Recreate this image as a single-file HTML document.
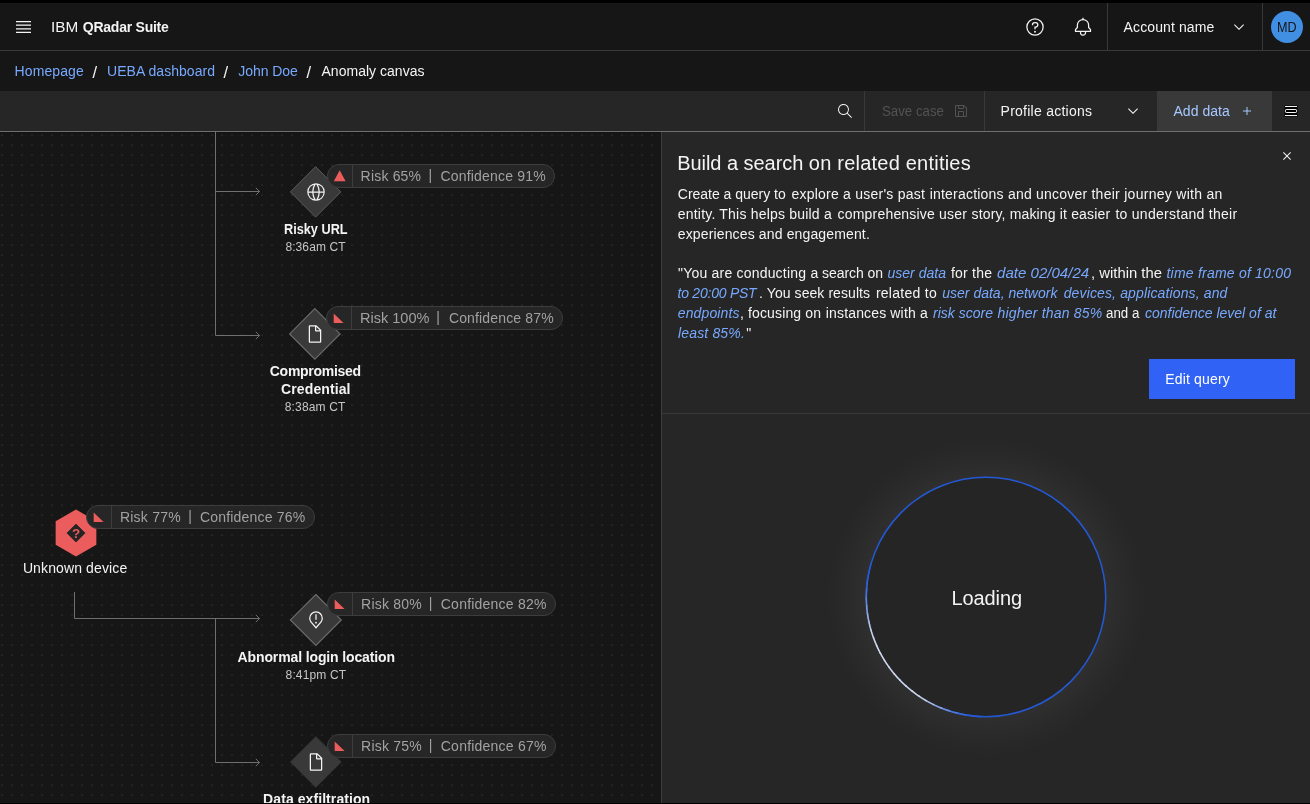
<!DOCTYPE html>
<html lang="en">
<head>
<meta charset="utf-8">
<title>IBM QRadar Suite - Anomaly canvas</title>
<style>
*{box-sizing:border-box;margin:0;padding:0}
html,body{width:1310px;height:804px;overflow:hidden;background:#161616}
body{position:relative;font-family:"Liberation Sans",sans-serif;font-size:14px;line-height:20px;color:#f4f4f4;-webkit-font-smoothing:antialiased}
#root{position:absolute;left:0;top:0;width:1310px;height:804px;will-change:transform}
.abs{position:absolute}
.t{position:absolute;white-space:nowrap;line-height:20px;font-size:14px}
svg{position:absolute;display:block;overflow:visible}
a{color:#78a9ff;text-decoration:none}
/* header */
#topstrip{left:0;top:0;width:1310px;height:3px;background:#000}
#header{left:0;top:3px;width:1310px;height:48px;background:#161616;border-bottom:1px solid #393939}
.vdiv{position:absolute;width:1px;background:#393939}
/* toolbar */
#toolbar{left:0;top:91px;width:1310px;height:41px;background:#262626;border-bottom:1px solid #6f6f6f}
#adddata{left:1157px;top:91px;width:115px;height:40px;background:#393939}
/* canvas */
#canvas{left:0;top:132px;width:661px;height:671px;background-color:#161616;overflow:hidden}
#bottomstrip{left:0;top:803px;width:1310px;height:1px;background:#000}
/* panel */
#panel{left:661px;top:132px;width:649px;height:671px;background:#262626;border-left:1px solid #3e3e3e}
#pdiv{left:662px;top:413px;width:648px;height:1px;background:#393939}
.body{color:#f4f4f4}
.lnk{color:#78a9ff;font-style:italic}
#btn{left:1149px;top:359px;width:146px;height:40px;background:#2f62f5}
#glow{left:826px;top:437px;width:320px;height:320px;border-radius:50%;background:radial-gradient(circle closest-side,#2f2f2f 0,#2f2f2f 75%,#2d2d2d 80%,#2a2a2a 87%,#282828 93%,#262626 100%)}
/* nodes */
.tag{position:absolute;height:24px;background:#262626;border:1px solid #3d3d3d;border-radius:12px}
.tag i{position:absolute;left:24px;top:0;width:1px;height:22px;background:#3d3d3d}
.tagtxt{color:#a2a2a2}
.lbl{font-weight:bold;color:#f4f4f4}
.time{font-size:12px;color:#c6c6c6;line-height:16px}
/*FIT*/
#h-ibm{left:51.01px !important;transform:scaleX(1.0935) !important;transform-origin:0 0}
#h-qr{left:82.80px !important;letter-spacing:-0.246px;transform:none !important}
#h-acc{left:1123.60px !important;letter-spacing:0.108px;transform:none !important}
#h-md{left:1277.20px !important;transform:scaleX(0.9002) !important;transform-origin:0 0}
#b1{left:14.60px !important;letter-spacing:0.100px;transform:none !important}
#b2{left:107.10px !important;letter-spacing:0.039px;transform:none !important}
#b3{left:238.30px !important;letter-spacing:-0.064px;transform:none !important}
#b4{left:321.50px !important;letter-spacing:0.022px;transform:none !important}
#tb-save{left:881.90px !important;transform:scaleX(0.9468) !important;transform-origin:0 0}
#tb-prof{left:1000.60px !important;letter-spacing:0.248px;transform:none !important}
#tb-add{left:1173.50px !important;letter-spacing:0.034px;transform:none !important}
#p-title1{left:677.20px !important;letter-spacing:-0.047px;transform:none !important}
#p-title2{left:808.80px !important;letter-spacing:0.223px;transform:none !important}
#p-b11{left:677.80px !important;letter-spacing:-0.018px;transform:none !important}
#p-b12{left:791.50px !important;letter-spacing:0.227px;transform:none !important}
#p-b13{left:929.70px !important;letter-spacing:0.210px;transform:none !important}
#p-b14{left:1091.40px !important;letter-spacing:0.285px;transform:none !important}
#p-b21{left:677.80px !important;letter-spacing:0.201px;transform:none !important}
#p-b22{left:837.60px !important;letter-spacing:0.188px;transform:none !important}
#p-b23{left:971.50px !important;letter-spacing:0.156px;transform:none !important}
#p-b24{left:1115.40px !important;letter-spacing:0.273px;transform:none !important}
#p-b3{left:677.80px !important;letter-spacing:0.140px;transform:none !important}
#q1a1{left:678.10px !important;letter-spacing:0.198px;transform:none !important}
#q1a2{left:810.50px !important;letter-spacing:-0.057px;transform:none !important}
#q1b{left:887.40px !important;letter-spacing:0.027px;transform:none !important}
#q1c{left:950.90px !important;letter-spacing:0.233px;transform:none !important}
#q1d{left:997.30px !important;transform:scaleX(1.0763) !important;transform-origin:0 0}
#q1e{left:1090.64px !important;transform:scaleX(1.0599) !important;transform-origin:0 0}
#q1f{left:1166.50px !important;letter-spacing:0.215px;transform:none !important}
#q2a{left:677.50px !important;letter-spacing:-0.233px;transform:none !important}
#q2b1{left:759.10px !important;letter-spacing:0.071px;transform:none !important}
#q2b2{left:875.90px !important;letter-spacing:0.268px;transform:none !important}
#q2c1{left:942.30px !important;letter-spacing:-0.004px;transform:none !important}
#q2c2{left:1063.70px !important;letter-spacing:0.135px;transform:none !important}
#q3a{left:677.80px !important;letter-spacing:0.110px;transform:none !important}
#q3b1{left:739.90px !important;letter-spacing:0.142px;transform:none !important}
#q3b2{left:825.80px !important;letter-spacing:0.152px;transform:none !important}
#q3c1{left:933.00px !important;letter-spacing:0.021px;transform:none !important}
#q3c2{left:997.60px !important;letter-spacing:0.185px;transform:none !important}
#q3d{left:1106.20px !important;transform:scaleX(0.9504) !important;transform-origin:0 0}
#q3e{left:1145.00px !important;letter-spacing:-0.011px;transform:none !important}
#q4a{left:678.10px !important;letter-spacing:0.146px;transform:none !important}
#q4b{left:746.20px !important;letter-spacing:0.000px;transform:none !important}
#btn-t{left:1165.20px !important;letter-spacing:0.174px;transform:none !important}
#load{left:951.40px !important;letter-spacing:-0.076px;transform:none !important}
#n1r{left:360.60px !important;letter-spacing:0.188px;transform:none !important}
#n1c{left:440.50px !important;letter-spacing:0.185px;transform:none !important}
#n1l0{left:284.10px !important;transform:scaleX(0.9082) !important;transform-origin:0 0}
#n1t{left:285.40px !important;letter-spacing:0.097px;transform:none !important}
#n2r{left:359.86px !important;transform:scaleX(1.0371) !important;transform-origin:0 0}
#n2c{left:448.90px !important;letter-spacing:0.155px;transform:none !important}
#n2l0{left:269.80px !important;letter-spacing:-0.287px;transform:none !important}
#n2l1{left:281.10px !important;letter-spacing:0.103px;transform:none !important}
#n2t{left:284.80px !important;letter-spacing:0.147px;transform:none !important}
#n3r{left:119.90px !important;letter-spacing:0.231px;transform:none !important}
#n3c{left:200.00px !important;letter-spacing:0.185px;transform:none !important}
#n3l0{left:22.90px !important;letter-spacing:0.120px;transform:none !important}
#n4r{left:361.10px !important;letter-spacing:0.202px;transform:none !important}
#n4c{left:440.80px !important;letter-spacing:0.216px;transform:none !important}
#n4l0{left:237.60px !important;letter-spacing:-0.126px;transform:none !important}
#n4t{left:285.60px !important;letter-spacing:0.134px;transform:none !important}
#n5r{left:361.10px !important;letter-spacing:0.202px;transform:none !important}
#n5c{left:440.80px !important;letter-spacing:0.216px;transform:none !important}
#n5l0{left:263.10px !important;letter-spacing:0.078px;transform:none !important}
/*ENDFIT*/
</style>
</head>
<body>
<div id="root">
<div id="topstrip" class="abs"></div>
<div id="header" class="abs">
<svg width="20" height="20" viewBox="0 0 20 20" style="left:14px;top:14px" fill="#f4f4f4"><path d="M2 14.800H17V16H2zM2 11.200H17V12.400H2zM2 7.600H17V8.800H2zM2 4H17V5.200H2z"/></svg>
<span class="t" id="h-ibm" style="left:51.500px;top:14px">IBM</span>
<span class="t" id="h-qr" style="left:82.500px;top:14px;font-weight:bold">QRadar Suite</span>
<svg width="20" height="20" viewBox="0 0 32 32" style="left:1025px;top:14px" fill="#f4f4f4"><path d="M16,2A14,14,0,1,0,30,16,14,14,0,0,0,16,2Zm0,26A12,12,0,1,1,28,16,12,12,0,0,1,16,28Z"/><circle cx="16" cy="23.500" r="1.500"/><path d="M17,8H15.500A4.490,4.490,0,0,0,11,12.500V13h2v-.500A2.500,2.500,0,0,1,15.500,10H17a2.500,2.500,0,0,1,0,5H15v4.500h2V17a4.500,4.500,0,0,0,0-9Z"/></svg>
<svg width="20" height="20" viewBox="0 0 32 32" style="left:1073px;top:14px" fill="#f4f4f4"><path d="M28.707,19.293,26,16.586V13a10.014,10.014,0,0,0-9-9.949V1H15V3.051A10.014,10.014,0,0,0,6,13v3.586L3.293,19.293A1,1,0,0,0,3,20v3a1,1,0,0,0,1,1h7v.777a5.152,5.152,0,0,0,4.500,5.199A5.006,5.006,0,0,0,21,25V24h7a1,1,0,0,0,1-1V20A1,1,0,0,0,28.707,19.293ZM19,25a3,3,0,0,1-6,0V24h6Zm8-3H5V20.414L7.707,17.707A1,1,0,0,0,8,17V13a8,8,0,0,1,16,0v4a1,1,0,0,0,.293.707L27,20.414Z"/></svg>
<div class="vdiv" style="left:1107px;top:0;height:47px"></div>
<span class="t" id="h-acc" style="left:1123.500px;top:14px">Account name</span>
<svg width="16" height="16" viewBox="0 0 16 16" style="left:1231px;top:16px" fill="#f4f4f4"><path d="M8 11L3 6 3.700 5.300 8 9.600 12.300 5.300 13 6z"/></svg>
<div class="vdiv" style="left:1262px;top:0;height:47px"></div>
<div class="abs" style="left:1271px;top:8px;width:32px;height:32px;border-radius:16px;background:#408fe2"></div>
<span class="t" id="h-md" style="left:1277.500px;top:14px;color:#161616">MD</span>
</div>
<span class="t" id="b1" style="left:15px;top:61px"><a>Homepage</a></span>
<span class="t" id="b1s" style="left:92.6px;top:62.300px;font-size:16.500px">/</span>
<span class="t" id="b2" style="left:107.500px;top:61px"><a>UEBA dashboard</a></span>
<span class="t" id="b2s" style="left:223.6px;top:62.300px;font-size:16.500px">/</span>
<span class="t" id="b3" style="left:238px;top:61px"><a>John Doe</a></span>
<span class="t" id="b3s" style="left:306.6px;top:62.300px;font-size:16.500px">/</span>
<span class="t" id="b4" style="left:321.500px;top:61px">Anomaly canvas</span>
<div id="toolbar" class="abs"></div>
<div id="adddata" class="abs"></div>
<svg width="16" height="16" viewBox="0 0 16 16" style="left:837px;top:103px" fill="#f4f4f4"><path d="M15,14.300L10.700,10c1.900-2.300,1.600-5.800-0.700-7.700S4.200,0.700,2.300,3S0.700,8.800,3,10.700c2,1.700,5,1.700,7,0l4.300,4.300L15,14.300z M2,6.500C2,4,4,2,6.500,2S11,4,11,6.500S9,11,6.500,11S2,9,2,6.500z"/></svg>
<div class="vdiv" style="left:864px;top:91px;height:40px"></div>
<span class="t" id="tb-save" style="left:881.500px;top:101px;color:#525252">Save case</span>
<svg width="16" height="16" viewBox="0 0 32 32" style="left:953px;top:103px" fill="#525252"><path d="M27.710,9.290l-5-5A1,1,0,0,0,22,4H6A2,2,0,0,0,4,6V26a2,2,0,0,0,2,2H26a2,2,0,0,0,2-2V10A1,1,0,0,0,27.710,9.290ZM12,6h8v4H12Zm8,20H12V18h8Zm2,0V18a2,2,0,0,0-2-2H12a2,2,0,0,0-2,2v8H6V6h4v4a2,2,0,0,0,2,2h8a2,2,0,0,0,2-2V6.410l4,4V26Z"/></svg>
<div class="vdiv" style="left:984px;top:91px;height:40px"></div>
<span class="t" id="tb-prof" style="left:1001px;top:101px">Profile actions</span>
<svg width="16" height="16" viewBox="0 0 16 16" style="left:1125px;top:103px" fill="#f4f4f4"><path d="M8 11L3 6 3.700 5.300 8 9.600 12.300 5.300 13 6z"/></svg>
<span class="t" id="tb-add" style="left:1173.500px;top:101px;color:#a6c8ff">Add data</span>
<svg width="16" height="16" viewBox="0 0 32 32" style="left:1239px;top:103px" fill="#a6c8ff"><path d="M17 15L17 8 15 8 15 15 8 15 8 17 15 17 15 24 17 24 17 17 24 17 24 15z"/></svg>
<svg width="16" height="16" viewBox="0 0 16 16" style="left:1283px;top:103px"><rect x="1.500" y="2.500" width="13" height="11" fill="#000"/><path d="M2 3.500H14M2 12.500H14" stroke="#f4f4f4" stroke-width="1" fill="none"/><rect x="2.500" y="6.500" width="11" height="3" rx="0.700" fill="none" stroke="#f4f4f4" stroke-width="1"/></svg>
<div id="canvas" class="abs">
<svg width="661" height="671" style="left:0;top:0"><defs><pattern id="dots" width="10" height="10" patternUnits="userSpaceOnUse"><rect x="1.35" y="2.5" width="1.3" height="1.3" fill="#343434"/></pattern></defs><rect width="661" height="671" fill="url(#dots)"/><rect width="661" height="1" fill="#121212"/></svg>
<!--CANVAS-->
<svg width="661" height="671" style="left:0;top:0"><path d="M215.500 0V203.5H259.500" fill="none" stroke="#6f6f6f"/><path d="M215.500 59.5H259.500" fill="none" stroke="#6f6f6f"/><path d="M255.8 55.8L259.5 59.5L255.8 63.2" fill="none" stroke="#6f6f6f"/><path d="M255.8 199.8L259.5 203.5L255.8 207.2" fill="none" stroke="#6f6f6f"/><path d="M74.500 460V486.5H259.500" fill="none" stroke="#6f6f6f"/><path d="M215.500 486.5V630.5H259.500" fill="none" stroke="#6f6f6f"/><path d="M255.8 482.8L259.5 486.5L255.8 490.2" fill="none" stroke="#6f6f6f"/><path d="M255.8 626.8L259.5 630.5L255.8 634.2" fill="none" stroke="#6f6f6f"/></svg>
<svg width="661" height="671" style="left:0;top:0"><polygon points="315.6,34.7 340.8,59.900000000000006 315.6,85.10000000000001 290.40000000000003,59.900000000000006" fill="#393939" stroke="#5c5c5c" stroke-width="1"/></svg>
<svg width="20" height="20" viewBox="0 0 32 32" style="left:305.6px;top:49.900000000000006px" fill="#f4f4f4"><path d="M16,2A14,14,0,1,0,30,16,14,14,0,0,0,16,2ZM28,15H22A24.260,24.260,0,0,0,19.210,4.450,12,12,0,0,1,28,15ZM16,28a5,5,0,0,1-.670,0A21.850,21.850,0,0,1,12,17H20a21.850,21.850,0,0,1-3.300,11A5,5,0,0,1,16,28ZM12,15a21.850,21.850,0,0,1,3.300-11,6,6,0,0,1,1.340,0A21.850,21.850,0,0,1,20,15Zm.760-10.550A24.260,24.260,0,0,0,10,15H4A12,12,0,0,1,12.790,4.450ZM4.050,17h6a24.260,24.260,0,0,0,2.750,10.550A12,12,0,0,1,4.050,17ZM19.210,27.550A24.260,24.260,0,0,0,22,17h6A12,12,0,0,1,19.210,27.550Z"/></svg>
<div class="tag" style="left:327px;top:32px;width:228px"><i></i></div>
<svg width="661" height="671" style="left:0;top:0"><polygon points="339.7,38.2 345.6,49.2 333.8,49.2" fill="#eb5c5c"/></svg>
<span class="t tagtxt" id="n1r" style="left:361px;top:34px">Risk 65%</span>
<span class="t tagtxt" id="n1b" style="left:428.5px;top:33px">|</span>
<span class="t tagtxt" id="n1c" style="left:440px;top:34px">Confidence 91%</span>
<span class="t lbl" id="n1l0" style="left:315.7px;top:86.5px;transform:translateX(-50%)">Risky URL</span>
<span class="t time" id="n1t" style="left:315.7px;top:106.5px;transform:translateX(-50%)">8:36am CT</span>
<svg width="661" height="671" style="left:0;top:0"><polygon points="314.85,176.7 340.05,201.89999999999998 314.85,227.09999999999997 289.65000000000003,201.89999999999998" fill="#393939" stroke="#6c6c6c" stroke-width="1.2"/></svg>
<svg width="20" height="20" viewBox="0 0 32 32" style="left:304.85px;top:191.89999999999998px" fill="#f4f4f4"><path d="M25.700,9.300l-7-7C18.500,2.100,18.300,2,18,2H8C6.900,2,6,2.900,6,4v24c0,1.100,0.900,2,2,2h16c1.100,0,2-0.900,2-2V10C26,9.700,25.900,9.500,25.700,9.300z M18,4.400l5.600,5.600H18V4.400z M24,28H8V4h8v6c0,1.100,0.900,2,2,2h6V28z"/></svg>
<div class="tag" style="left:326px;top:174px;width:237px"><i></i></div>
<svg width="661" height="671" style="left:0;top:0"><polygon points="333.7,181.4 343.6,191.1 333.7,191.1" fill="#eb5c5c"/></svg>
<span class="t tagtxt" id="n2r" style="left:360.3px;top:176px">Risk 100%</span>
<span class="t tagtxt" id="n2b" style="left:436.3px;top:175px">|</span>
<span class="t tagtxt" id="n2c" style="left:448.5px;top:176px">Confidence 87%</span>
<span class="t lbl" id="n2l0" style="left:315px;top:228.7px;transform:translateX(-50%)">Compromised</span>
<span class="t lbl" id="n2l1" style="left:315px;top:246.7px;transform:translateX(-50%)">Credential</span>
<span class="t time" id="n2t" style="left:315px;top:266.7px;transform:translateX(-50%)">8:38am CT</span>
<svg width="661" height="671" style="left:0;top:0"><polygon points="76.00,377.60 96.35,389.35 96.35,412.85 76.00,424.60 55.65,412.85 55.65,389.35" fill="#eb5c5c"/><polygon points="76,392.1 85,401.1 76,410.1 67,401.1" fill="#242424" stroke="#242424" stroke-width="0.8" stroke-linejoin="round"/><text x="76" y="405.90000000000003" text-anchor="middle" font-family="Liberation Sans, sans-serif" font-weight="bold" font-size="13.5" fill="#eb5c5c">?</text></svg>
<div class="tag" style="left:86px;top:373px;width:229px"><i></i></div>
<svg width="661" height="671" style="left:0;top:0"><polygon points="93.7,380.4 103.6,390.1 93.7,390.1" fill="#eb5c5c"/></svg>
<span class="t tagtxt" id="n3r" style="left:120.3px;top:375px">Risk 77%</span>
<span class="t tagtxt" id="n3b" style="left:188.2px;top:374px">|</span>
<span class="t tagtxt" id="n3c" style="left:199.6px;top:375px">Confidence 76%</span>
<span class="t" id="n3l0" style="left:75.300px;top:425.79999999999995px;transform:translateX(-50%)">Unknown device</span>
<svg width="661" height="671" style="left:0;top:0"><polygon points="315.85,462.5 341.25,487.9 315.85,513.3 290.45000000000005,487.9" fill="#393939" stroke="#6c6c6c" stroke-width="1.2"/></svg>
<svg width="20" height="20" viewBox="0 0 32 32" style="left:305.85px;top:477.9px" fill="#f4f4f4"><path d="M16,30,7.564,20.051a11.800,11.800,0,0,1-.458-.604A10.890,10.890,0,0,1,5,13a11,11,0,0,1,22,0,10.884,10.884,0,0,1-2.105,6.445l-.001.002s-.300.394-.345.447ZM8.700,18.240s.234.308.286.374L16,26.908l7.024-8.284c.044-.056.281-.369.282-.370A8.909,8.909,0,0,0,25,13,9,9,0,0,0,7,13a8.905,8.905,0,0,0,1.702,5.242Z"/><path d="M15 6.800h2v8.700h-2z"/><circle cx="16" cy="20.300" r="1.450"/></svg>
<div class="tag" style="left:327px;top:460px;width:228.5px"><i></i></div>
<svg width="661" height="671" style="left:0;top:0"><polygon points="334.7,467.4 344.6,477.1 334.7,477.1" fill="#eb5c5c"/></svg>
<span class="t tagtxt" id="n4r" style="left:361.5px;top:462px">Risk 80%</span>
<span class="t tagtxt" id="n4b" style="left:428.8px;top:461px">|</span>
<span class="t tagtxt" id="n4c" style="left:440.5px;top:462px">Confidence 82%</span>
<span class="t lbl" id="n4l0" style="left:316px;top:514.7px;transform:translateX(-50%)">Abnormal login location</span>
<span class="t time" id="n4t" style="left:316px;top:534.7px;transform:translateX(-50%)">8:41pm CT</span>
<svg width="661" height="671" style="left:0;top:0"><polygon points="315.85,604.4 341.35,629.9 315.85,655.4 290.35,629.9" fill="#393939" stroke="#393939" stroke-width="0.5"/></svg>
<svg width="20" height="20" viewBox="0 0 32 32" style="left:305.85px;top:619.9px" fill="#f4f4f4"><path d="M25.700,9.300l-7-7C18.500,2.100,18.300,2,18,2H8C6.900,2,6,2.900,6,4v24c0,1.100,0.900,2,2,2h16c1.100,0,2-0.900,2-2V10C26,9.700,25.900,9.500,25.700,9.300z M18,4.400l5.600,5.600H18V4.400z M24,28H8V4h8v6c0,1.100,0.900,2,2,2h6V28z"/></svg>
<div class="tag" style="left:327px;top:602px;width:228.5px"><i></i></div>
<svg width="661" height="671" style="left:0;top:0"><polygon points="334.7,609.4 344.6,619.1 334.7,619.1" fill="#eb5c5c"/></svg>
<span class="t tagtxt" id="n5r" style="left:361.5px;top:604px">Risk 75%</span>
<span class="t tagtxt" id="n5b" style="left:428.8px;top:603px">|</span>
<span class="t tagtxt" id="n5c" style="left:440.5px;top:604px">Confidence 67%</span>
<span class="t lbl" id="n5l0" style="left:316px;top:656.7px;transform:translateX(-50%)">Data exfiltration</span>
<!--/CANVAS-->
</div>
<div id="panel" class="abs"></div>
<div id="pdiv" class="abs"></div>
<svg width="16" height="16" viewBox="0 0 32 32" style="left:1279px;top:148px" fill="#f4f4f4"><path d="M17.414 16L24 9.414 22.586 8 16 14.586 9.414 8 8 9.414 14.586 16 8 22.586 9.414 24 16 17.414 22.586 24 24 22.586 17.414 16z"/></svg>
<span class="t" id="p-title1" style="left:677.6px;top:148.500px;font-size:20px;line-height:28px">Build a search</span>
<span class="t" id="p-title2" style="left:808.5px;top:148.500px;font-size:20px;line-height:28px">on related entities</span>
<span class="t" id="p-b11" style="left:677.5px;top:184px">Create a query to</span>
<span class="t" id="p-b12" style="left:791.2px;top:184px">explore a user's past</span>
<span class="t" id="p-b13" style="left:929.1px;top:184px">interactions and uncover</span>
<span class="t" id="p-b14" style="left:1091.4px;top:184px">their journey with an</span>
<span class="t" id="p-b21" style="left:677.5px;top:204px">entity. This helps build a</span>
<span class="t" id="p-b22" style="left:837.3px;top:204px">comprehensive user</span>
<span class="t" id="p-b23" style="left:971.2px;top:204px">story, making it easier</span>
<span class="t" id="p-b24" style="left:1115.4px;top:204px">to understand their</span>
<span class="t" id="p-b3" style="left:677.500px;top:224px">experiences and engagement.</span>
<span class="t" id="q1a1" style="left:677.5px;top:263px">"You are conducting</span>
<span class="t" id="q1a2" style="left:810.2px;top:263px">a search on</span>
<span class="t lnk" id="q1b" style="left:886.800px;top:263px">user data</span>
<span class="t" id="q1c" style="left:950.900px;top:263px">for the</span>
<span class="t lnk" id="q1d" style="left:997px;top:263px">date 02/04/24</span>
<span class="t" id="q1e" style="left:1091.700px;top:263px">, within the</span>
<span class="t lnk" id="q1f" style="left:1166.500px;top:263px">time frame of 10:00</span>
<span class="t lnk" id="q2a" style="left:677.500px;top:283px">to 20:00 PST</span>
<span class="t" id="q2b1" style="left:760.1px;top:283px">. You seek results</span>
<span class="t" id="q2b2" style="left:875.3px;top:283px">related to</span>
<span class="t lnk" id="q2c1" style="left:941.7px;top:283px">user data, network</span>
<span class="t lnk" id="q2c2" style="left:1063.4px;top:283px">devices, applications, and</span>
<span class="t lnk" id="q3a" style="left:677.500px;top:303px">endpoints</span>
<span class="t" id="q3b1" style="left:740.9px;top:303px">, focusing on</span>
<span class="t" id="q3b2" style="left:825.2px;top:303px">instances with a</span>
<span class="t lnk" id="q3c1" style="left:932.4px;top:303px">risk score</span>
<span class="t lnk" id="q3c2" style="left:997px;top:303px">higher than 85%</span>
<span class="t" id="q3d" style="left:1105.900px;top:303px">and a</span>
<span class="t lnk" id="q3e" style="left:1144.700px;top:303px">confidence level of at</span>
<span class="t lnk" id="q4a" style="left:677.500px;top:323px">least 85%.</span>
<span class="t" id="q4b" style="left:745.600px;top:323px">"</span>
<div id="btn" class="abs"></div>
<span class="t" id="btn-t" style="left:1165px;top:369px;color:#fff">Edit query</span>
<div id="glow" class="abs"></div>
<svg width="260" height="260" viewBox="-130 -130 260 260" style="left:856px;top:467px"><circle cx="0" cy="0" r="119.7" fill="#252525" stroke="#2459d6" stroke-width="1.500"/><g fill="none" stroke-width="1.500"><path d="M-3.55 119.65A119.7 119.7 0 0 1 -13.14 118.98" stroke="#2459d6"/><path d="M-11.89 119.11A119.7 119.7 0 0 1 -21.40 117.77" stroke="#285cd6"/><path d="M-20.17 117.99A119.7 119.7 0 0 1 -29.57 115.99" stroke="#3968d6"/><path d="M-28.35 116.29A119.7 119.7 0 0 1 -37.58 113.65" stroke="#537ad7"/><path d="M-36.39 114.03A119.7 119.7 0 0 1 -45.42 110.75" stroke="#7290d7"/><path d="M-44.26 111.22A119.7 119.7 0 0 1 -53.04 107.31" stroke="#92a7d7"/><path d="M-51.91 107.86A119.7 119.7 0 0 1 -60.39 103.35" stroke="#b0bcd8"/><path d="M-59.31 103.98A119.7 119.7 0 0 1 -67.45 98.88" stroke="#c8cdd8"/><path d="M-66.41 99.58A119.7 119.7 0 0 1 -74.19 93.94" stroke="#d6d7d8"/><path d="M-73.20 94.71A119.7 119.7 0 0 1 -80.56 88.53" stroke="#d8d8d8"/><path d="M-79.63 89.37A119.7 119.7 0 0 1 -86.54 82.70" stroke="#d8d8d8"/><path d="M-85.67 83.60A119.7 119.7 0 0 1 -92.10 76.46" stroke="#d8d8d8"/><path d="M-91.29 77.42A119.7 119.7 0 0 1 -97.21 69.85" stroke="#d8d8d8"/><path d="M-96.47 70.86A119.7 119.7 0 0 1 -101.84 62.90" stroke="#d8d8d8"/><path d="M-101.18 63.96A119.7 119.7 0 0 1 -105.98 55.64" stroke="#d8d8d8"/><path d="M-105.39 56.75A119.7 119.7 0 0 1 -109.60 48.11" stroke="#d8d8d8"/><path d="M-109.09 49.26A119.7 119.7 0 0 1 -112.69 40.35" stroke="#d8d8d8"/><path d="M-112.27 41.53A119.7 119.7 0 0 1 -115.23 32.39" stroke="#d1d3d8"/><path d="M-114.89 33.60A119.7 119.7 0 0 1 -117.21 24.27" stroke="#bfc6d8"/><path d="M-116.95 25.50A119.7 119.7 0 0 1 -118.62 16.04" stroke="#a5b4d7"/><path d="M-118.45 17.28A119.7 119.7 0 0 1 -119.45 7.72" stroke="#869ed7"/><path d="M-119.36 8.97A119.7 119.7 0 0 1 -119.70 -0.63" stroke="#6688d7"/><path d="M-119.70 0.63A119.7 119.7 0 0 1 -119.36 -8.97" stroke="#4a73d6"/><path d="M-119.45 -7.72A119.7 119.7 0 0 1 -118.45 -17.28" stroke="#3363d6"/><path d="M-118.62 -16.04A119.7 119.7 0 0 1 -116.95 -25.50" stroke="#265ad6"/><path d="M-117.21 -24.27A119.7 119.7 0 0 1 -114.89 -33.60" stroke="#2459d6"/></g></svg>
<span class="t" id="load" style="left:986px;top:583.500px;font-size:20px;line-height:28px;transform:translateX(-50%)">Loading</span>
<div id="bottomstrip" class="abs"></div>
</div>
</body>
</html>
